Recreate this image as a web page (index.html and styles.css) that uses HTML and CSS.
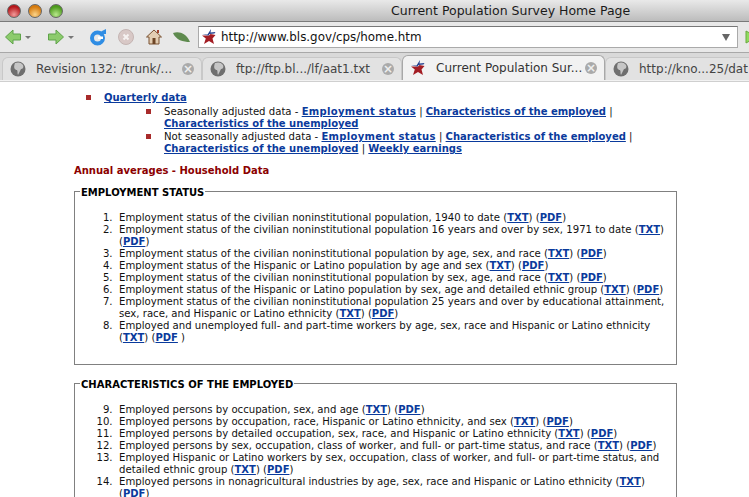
FILE: index.html
```html
<!DOCTYPE html>
<html lang="en">
  <head>
    <meta charset="UTF-8" />
    <link rel="stylesheet" href="styles.css">
    <title>Current Population Survey Home Page</title>
  </head>
  <body>
    <svg class="defs" width="0" height="0">
      <symbol id="bls-star" viewBox="0 0 16 16">
        <path d="M8 6.500 9.500 5 14.500 6 11.500 9.500 13 15 8 12 3 15 4.800 9.500 1 6.500z" fill="#a31d24"/>
        <path d="M1 5.500h5.500L10 0l-.5 3.500 5-.5-1 1.500-5 .5L7.500 6.500z" fill="#23408f"/>
      </symbol>
      <symbol id="globe" viewBox="0 0 16 16">
        <circle cx="8" cy="8" r="7.500" fill="#6f6f6f"/>
        <path d="M5 2c3-1 6-1 8 2 1 2 0 4-2 4-1 2-2 4-3 6-1-2 0-3-1-5C5 9 3 7 5 2z" fill="#c6c6c6"/>
      </symbol>
    </svg>

    <div class="titlebar">
      <div class="lights">
        <span class="light red"></span>
        <span class="light amber"></span>
        <span class="light green"></span>
      </div>
      <div class="window-title">Current Population Survey Home Page</div>
    </div>

    <div class="toolbar">
      <svg class="back" width="16" height="16" viewBox="0 0 16 16"><path d="M.5 8 8 1v4h7.500v6H8v4z" fill="#8ccb6c" stroke="#5fa34a"/></svg>
      <span class="caret"></span>
      <svg class="forward" width="16" height="16" viewBox="0 0 16 16"><path d="M15.500 8 8 1v4H.5v6H8v4z" fill="#8ccb6c" stroke="#5fa34a"/></svg>
      <span class="caret"></span>
      <svg class="reload" width="16" height="17" viewBox="0 0 16 17"><circle cx="7.500" cy="9" r="5.500" fill="none" stroke="#2f8de4" stroke-width="4"/><path d="M7 5h9V0l-3 1.500z" fill="#2f8de4"/><path d="M8 7.500h5V10H8z" fill="#fff"/></svg>
      <svg class="stop" width="16" height="16" viewBox="0 0 16 16"><circle cx="8" cy="8" r="7.500" fill="#d8c8c6" stroke="#c4b4b2"/><path d="m5.500 5.500 5 5m0-5-5 5" stroke="#f6f2f1" stroke-width="2"/></svg>
      <svg class="home" width="16" height="16" viewBox="0 0 16 16"><path d="M8 1 .5 8H3v7h10V8h2.500z" fill="#e3cdb2" stroke="#7a5233"/><path d="M11 1h2v3h-2z" fill="#a5442c"/><path d="M6.500 9h3v6h-3z" fill="#6d4526"/></svg>
      <svg class="leaf" width="17" height="10" viewBox="0 0 17 10"><path d="M0 1c6-2 13 0 17 9C10 10 3 8 0 1z" fill="#5e8a4e"/></svg>
      <div class="urlbar">
        <svg class="star" width="16" height="16"><use href="#bls-star"/></svg>
        <span class="url">http://www.bls.gov/cps/home.htm</span>
        <span class="url-drop"></span>
      </div>
      <svg class="go" width="12" height="14" viewBox="0 0 12 14"><path d="M1 1v12l11-6z" fill="#8fdc5e" stroke="#6aa83f"/></svg>
    </div>

    <div class="tabbar">
      <div class="tab">
        <svg width="16" height="16"><use href="#globe"/></svg><span class="tab-label">Revision 132: /trunk/...</span><span class="tab-close"></span>
      </div>
      <div class="tab">
        <svg width="16" height="16"><use href="#globe"/></svg><span class="tab-label">ftp://ftp.bl.../lf/aat1.txt</span><span class="tab-close"></span>
      </div>
      <div class="tab tab-active">
        <svg width="16" height="16"><use href="#bls-star"/></svg><span class="tab-label">Current Population Sur...</span><span class="tab-close"></span>
      </div>
      <div class="tab tab-last">
        <svg width="16" height="16"><use href="#globe"/></svg><span class="tab-label">http://kno...25/dat</span>
      </div>
    </div>
    <div class="tabbar-rule"></div>

    <div class="page">
      <ul class="quarterly">
        <li>
          <a href="#">Quarterly data</a>
          <ul>
            <li>Seasonally adjusted data - <a class="status-link" href="#">Employment status</a> | <a href="#">Characteristics of the employed</a> | <a href="#">Characteristics of the unemployed</a></li>
            <li>Not seasonally adjusted data - <a class="status-link" href="#">Employment status</a> | <a href="#">Characteristics of the employed</a> | <a href="#">Characteristics of the unemployed</a> | <a href="#">Weekly earnings</a></li>
          </ul>
        </li>
      </ul>

      <h4 class="annual">Annual averages - Household Data</h4>

      <fieldset class="group">
        <legend>EMPLOYMENT STATUS</legend>
        <ol>
          <li>Employment status of the civilian noninstitutional population, 1940 to date (<a href="#">TXT</a>) (<a href="#">PDF</a>)</li>
          <li>Employment status of the civilian noninstitutional population 16 years and over by sex, 1971 to date (<a href="#">TXT</a>) (<a href="#">PDF</a>)</li>
          <li>Employment status of the civilian noninstitutional population by age, sex, and race (<a href="#">TXT</a>) (<a href="#">PDF</a>)</li>
          <li>Employment status of the Hispanic or Latino population by age and sex (<a href="#">TXT</a>) (<a href="#">PDF</a>)</li>
          <li>Employment status of the civilian noninstitutional population by sex, age, and race (<a href="#">TXT</a>) (<a href="#">PDF</a>)</li>
          <li>Employment status of the Hispanic or Latino population by sex, age and detailed ethnic group (<a href="#">TXT</a>) (<a href="#">PDF</a>)</li>
          <li>Employment status of the civilian noninstitutional population 25 years and over by educational attainment, sex, race, and Hispanic or Latino ethnicity (<a href="#">TXT</a>) (<a href="#">PDF</a>)</li>
          <li>Employed and unemployed full- and part-time workers by age, sex, race and Hispanic or Latino ethnicity (<a href="#">TXT</a>) (<a href="#">PDF</a> )</li>
        </ol>
      </fieldset>

      <fieldset class="group">
        <legend>CHARACTERISTICS OF THE EMPLOYED</legend>
        <ol start="9">
          <li>Employed persons by occupation, sex, and age (<a href="#">TXT</a>) (<a href="#">PDF</a>)</li>
          <li>Employed persons by occupation, race, Hispanic or Latino ethnicity, and sex (<a href="#">TXT</a>) (<a href="#">PDF</a>)</li>
          <li>Employed persons by detailed occupation, sex, race, and Hispanic or Latino ethnicity (<a href="#">TXT</a>) (<a href="#">PDF</a>)</li>
          <li>Employed persons by sex, occupation, class of worker, and full- or part-time status, and race (<a href="#">TXT</a>) (<a href="#">PDF</a>)</li>
          <li>Employed Hispanic or Latino workers by sex, occupation, class of worker, and full- or part-time status, and detailed ethnic group (<a href="#">TXT</a>) (<a href="#">PDF</a>)</li>
          <li>Employed persons in nonagricultural industries by age, sex, race and Hispanic or Latino ethnicity (<a href="#">TXT</a>) (<a href="#">PDF</a>)</li>
        </ol>
      </fieldset>
    </div>
  </body>
</html>
```

FILE: styles.css
```css
html,
body {
  margin: 0;
  height: 497px;
  overflow: hidden;
  background: #fff;
}

body {
  font-family: "DejaVu Sans", Verdana, sans-serif;
  font-size: 10.15px;
  line-height: 12px;
  color: #111;
}

.defs {
  display: block;
  height: 0;
}

/* window chrome */
.titlebar {
  display: flex;
  align-items: center;
  height: 21px;
  padding-left: 7px;
  background: linear-gradient(#e9e9e9, #bcbcbc);
  border-bottom: 1px solid #7a7a7a;
}

.lights {
  display: flex;
  gap: 7px;
}

.light {
  width: 14px;
  height: 14px;
  border-radius: 50%;
  border: 1px solid #666;
  box-sizing: border-box;
}

.red {
  background: radial-gradient(circle at 50% 80%, #f29a9a, #b5161a 70%);
}

.amber {
  background: radial-gradient(circle at 50% 80%, #fbd48a, #d67a0c 70%);
}

.green {
  background: radial-gradient(circle at 50% 80%, #b8e88c, #4c9a1c 70%);
}

.window-title {
  margin-left: 328px;
  font-size: 12.5px;
  color: #1a1a1a;
}

.toolbar {
  display: flex;
  align-items: center;
  height: 30px;
  background: #e8e8e8;
  border-bottom: 1px solid #a8a8a8;
}

.toolbar svg {
  flex: none;
}

.back {
  margin-left: 5px;
}

.caret {
  flex: none;
  width: 0;
  height: 0;
  margin-left: 4px;
  border-left: 3px solid transparent;
  border-right: 3px solid transparent;
  border-top: 3px solid #777;
}

.forward {
  margin-left: 17px;
}

.reload {
  margin-left: 16px;
}

.stop {
  margin-left: 12px;
}

.home {
  margin-left: 12px;
}

.leaf {
  margin-left: 11px;
}

.urlbar {
  display: flex;
  align-items: center;
  flex: none;
  box-sizing: border-box;
  width: 540px;
  height: 22px;
  margin-left: 8px;
  padding: 0 7px 0 2px;
  background: #fff;
  border: 1px solid #aaa;
  border-top-color: #777;
}

.url {
  flex: 1;
  margin-left: 4px;
  font-size: 11.9px;
}

.url-drop {
  border-left: 4px solid transparent;
  border-right: 4px solid transparent;
  border-top: 7px solid #666;
}

.go {
  margin-left: 7px;
}

.tabbar {
  display: flex;
  align-items: flex-end;
  height: 26px;
  padding: 1px 0 0 2px;
  background: #d9d9d9;
  overflow: hidden;
}

.tab {
  display: flex;
  align-items: center;
  flex: none;
  box-sizing: border-box;
  width: 200px;
  height: 23px;
  padding: 0 7px;
  font-size: 12px;
  color: #444;
  background: #e2e2e2;
  border: 1px solid #c8c8c8;
  border-bottom: 0;
  border-radius: 6px 6px 0 0;
}

.tab-active {
  width: 203px;
  height: 25px;
  color: #333;
  background: #f2f2f2;
  border-color: #a8a8a8;
}

.tab-last {
  flex: 1;
}

.tab svg {
  flex: none;
}

.tab-label {
  flex: 1;
  margin-left: 10px;
  white-space: nowrap;
  overflow: hidden;
}

.tab-close {
  flex: none;
  position: relative;
  width: 12px;
  height: 12px;
  border-radius: 50%;
  background: #aaa;
}

.tab-close::before {
  content: "×";
  position: absolute;
  inset: 0;
  font-size: 12px;
  font-weight: bold;
  line-height: 12px;
  text-align: center;
  color: #eee;
}

.tabbar-rule {
  height: 1px;
  background: #f2f2f2;
  border-bottom: 1px solid #cfcfcf;
}

/* page content */
.page {
  padding: 10px 72px 0 74px;
}

.page a {
  color: #0a3a9c;
  font-size: 10px;
  font-weight: bold;
  text-decoration: underline;
}

.page a.status-link {
  letter-spacing: 0.3px;
}

.quarterly,
.quarterly ul {
  margin: 0;
  padding: 0;
  list-style: none;
}

.quarterly {
  padding-left: 30px;
}

.quarterly ul {
  margin-top: 2px;
  padding-left: 60px;
  line-height: 12.4px;
}

.quarterly li {
  position: relative;
}

.quarterly li::before {
  content: "";
  position: absolute;
  left: -18px;
  top: 3px;
  width: 5px;
  height: 5px;
  background: #a82b2b;
}

.annual {
  margin: 9px 0 8px;
  font-size: 10px;
  color: #8b0000;
}

.group {
  margin: 0 0 12px;
  padding: 13px 10px 20px 0;
  min-width: 0;
  border: 1px solid #808080;
}

.group legend {
  padding: 2px 1px 0;
  margin-left: 5px;
  font-size: 10px;
  font-weight: bold;
  color: #000;
}

.group ol {
  margin: 0;
  padding-left: 44px;
}

.group li::marker {
  content: counter(list-item) ".\00a0\00a0";
}
```
